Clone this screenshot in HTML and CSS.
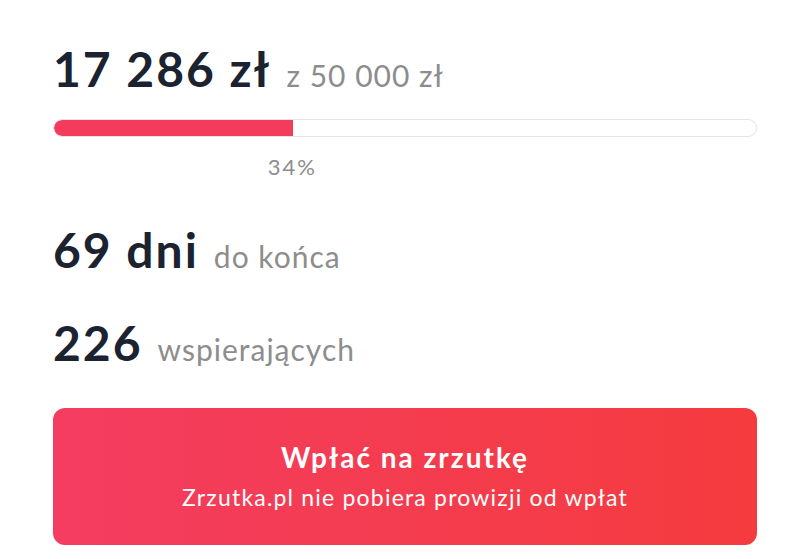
FILE: index.html
```html
<!DOCTYPE html>
<html lang="pl">
<head>
    <meta charset="UTF-8">
    <meta name="viewport" content="width=device-width, initial-scale=1.0">
    <title>Zrzutka</title>
    <link rel="stylesheet" href="styles.css">
</head>
<body>
    <main class="panel">
        <div class="raised">
            <span class="big">17 286 zł</span>
            <span class="muted">z 50 000 zł</span>
        </div>

        <div class="progress">
            <div class="progress-fill" style="width: 34%;"></div>
        </div>
        <div class="progress-label">
            <div class="progress-mark" style="width: 34%;"><span>34%</span></div>
        </div>

        <div class="stat days">
            <span class="big">69 dni</span>
            <span class="muted">do końca</span>
        </div>

        <div class="stat backers">
            <span class="big">226</span>
            <span class="muted">wspierających</span>
        </div>

        <a class="donate" href="#">
            <span class="donate-title">Wpłać na zrzutkę</span>
            <span class="donate-sub">Zrzutka.pl nie pobiera prowizji od wpłat</span>
        </a>
    </main>
</body>
</html>
```

FILE: styles.css
```css
body {
	font-family: Lato, "Noto Sans", sans-serif;
	margin: 0;
	padding: 0;
	background-color: #fff;
	color: #1b2230;
}

.panel {
	width: 704px;
	margin-left: 53px;
	padding-top: 45px;
}

.big {
	font-size: 48px;
	font-weight: 700;
	line-height: 1;
	letter-spacing: 2px;
}

.muted {
	color: #8d8d8d;
	font-size: 30px;
	letter-spacing: 1px;
	margin-left: 15px;
}

.raised,
.stat {
	display: flex;
	align-items: baseline;
}

.progress {
	margin-top: 26px;
	height: 16px;
	border: 1px solid #e4e4e4;
	border-radius: 9px;
	overflow: hidden;
	background-color: #fff;
}

.progress-fill {
	height: 100%;
	background-color: #f23b5d;
	border-radius: 9px 0 0 9px;
}

.progress-label {
	margin-top: 16px;
}

.progress-mark {
	text-align: right;
	color: #8d8d8d;
	font-size: 22px;
	letter-spacing: 2px;
}

.progress-mark span {
	display: inline-block;
	transform: translateX(50%);
}

.days {
	margin-top: 46px;
}

.backers {
	margin-top: 45px;
}

.donate {
	display: flex;
	flex-direction: column;
	align-items: center;
	margin-top: 41px;
	padding: 32px 0 34px;
	border-radius: 12px;
	background: linear-gradient(90deg, #f43d61, #f53b3e);
	color: #fff;
	text-decoration: none;
}

.donate-title {
	font-size: 28px;
	font-weight: 700;
	letter-spacing: 2px;
}

.donate-sub {
	margin-top: 9px;
	font-size: 23px;
	letter-spacing: 1.2px;
}
```
